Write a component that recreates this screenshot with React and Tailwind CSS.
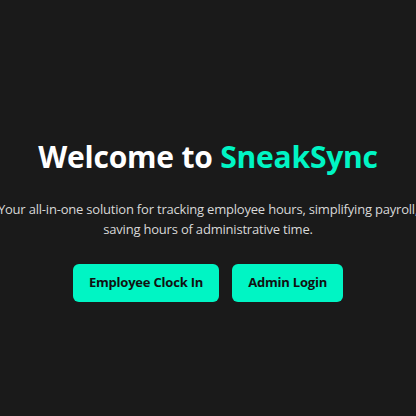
export default function App() {
  return (
    <div
      className="h-[416px] w-full overflow-hidden bg-[#1a1a1a] flex flex-col items-center pt-[137px]"
      style={{ fontFamily: '"Open Sans", "Noto Sans", sans-serif' }}
    >
      <h1 className="text-[30px] leading-[40px] font-bold text-white whitespace-nowrap tracking-[-0.2px]">
        Welcome to <span className="text-[#00f5c4]">SneakSync</span>
      </h1>
      <p className="mt-[22px] text-[13px] leading-5 text-[#d8d8d8] text-center whitespace-nowrap tracking-[-0.2px]">
        Your all-in-one solution for tracking employee hours, simplifying payroll,
        <br />
        saving hours of administrative time.
      </p>
      <div className="mt-[25px] flex gap-[13px]">
        <button className="h-[38px] px-4 rounded-md bg-[#00f5c4] text-[#111] text-[13px] font-bold tracking-[-0.2px]">
          Employee Clock In
        </button>
        <button className="h-[38px] px-4 rounded-md bg-[#00f5c4] text-[#111] text-[13px] font-bold tracking-[-0.2px]">
          Admin Login
        </button>
      </div>
    </div>
  );
}
